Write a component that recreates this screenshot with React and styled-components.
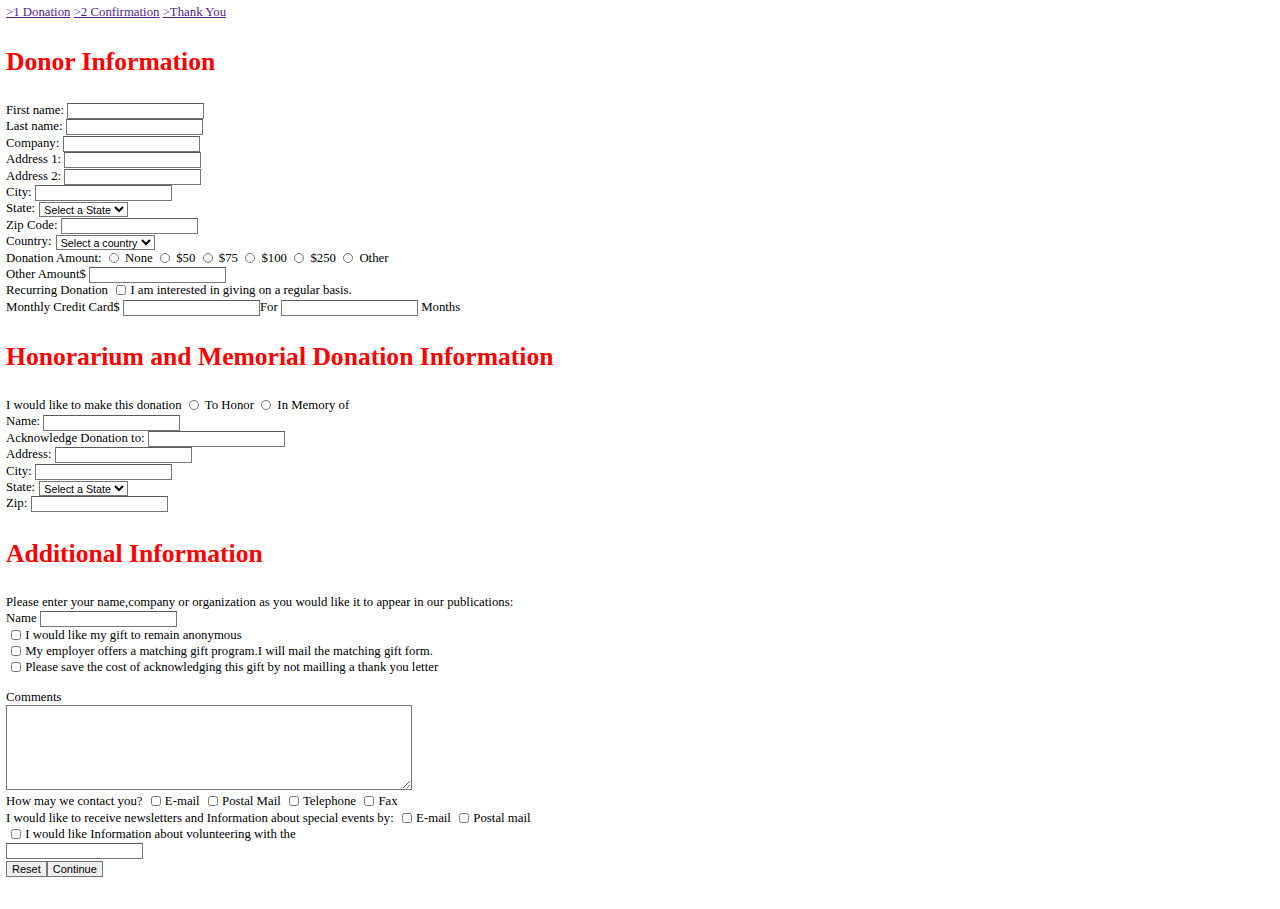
import React from 'react';
import styled, { createGlobalStyle } from 'styled-components';

const GlobalStyle = createGlobalStyle`
  body {
    margin: 0;
    background: #fff;
  }
`;

const states = ['Select a State'];
const countries = ['Select a country'];

const App = () => {
  return (
    <Page>
      <GlobalStyle />
      <Nav>
        <a href="#donation">&gt;1 Donation</a> <a href="#confirm">&gt;2 Confirmation</a>{' '}
        <a href="#thanks">&gt;Thank You</a>
      </Nav>

      <Heading>Donor Information</Heading>
      <Row>First name: <TextInput /></Row>
      <Row>Last name: <TextInput /></Row>
      <Row>Company: <TextInput /></Row>
      <Row>Address 1: <TextInput /></Row>
      <Row>Address 2: <TextInput /></Row>
      <Row>City: <TextInput /></Row>
      <Row>
        State:{' '}
        <Select defaultValue={states[0]}>
          {states.map((s) => (
            <option key={s}>{s}</option>
          ))}
        </Select>
      </Row>
      <Row>Zip Code: <TextInput /></Row>
      <Row>
        Country:{' '}
        <Select defaultValue={countries[0]}>
          {countries.map((c) => (
            <option key={c}>{c}</option>
          ))}
        </Select>
      </Row>
      <Row>
        Donation Amount:
        {['None', '$50', '$75', '$100', '$250', 'Other'].map((v) => (
          <React.Fragment key={v}>
            {' '}
            <Radio name="amount" /> {v}
          </React.Fragment>
        ))}
      </Row>
      <Row>Other Amount$ <TextInput /></Row>
      <Row>
        Recurring Donation <Check /> I am interested in giving on a regular basis.
      </Row>
      <Row>
        Monthly Credit Card$ <TextInput />For <TextInput /> Months
      </Row>

      <Heading>Honorarium and Memorial Donation Information</Heading>
      <Row>
        I would like to make this donation <Radio name="honor" /> To Honor{' '}
        <Radio name="honor" /> In Memory of
      </Row>
      <Row>Name: <TextInput /></Row>
      <Row>Acknowledge Donation to: <TextInput /></Row>
      <Row>Address: <TextInput /></Row>
      <Row>City: <TextInput /></Row>
      <Row>
        State:{' '}
        <Select defaultValue={states[0]}>
          {states.map((s) => (
            <option key={s}>{s}</option>
          ))}
        </Select>
      </Row>
      <Row>Zip: <TextInput /></Row>

      <Heading>Additional Information</Heading>
      <Row>Please enter your name,company or organization as you would like it to appear in our publications:</Row>
      <Row>Name <TextInput /></Row>
      <Row><Check /> I would like my gift to remain anonymous</Row>
      <Row><Check /> My employer offers a matching gift program.I will mail the matching gift form.</Row>
      <Row><Check /> Please save the cost of acknowledging this gift by not mailling a thank you letter</Row>
      <Spacer />
      <Row>Comments</Row>
      <Comments />
      <Row>
        How may we contact you? <Check /> E-mail <Check /> Postal Mail <Check /> Telephone{' '}
        <Check /> Fax
      </Row>
      <Row>
        I would like to receive newsletters and Information about special events by: <Check /> E-mail{' '}
        <Check /> Postal mail
      </Row>
      <Row><Check /> I would like Information about volunteering with the</Row>
      <InputRow>
        <TextInput />
      </InputRow>
      <Buttons>
        <Button type="reset">Reset</Button>
        <Button type="button">Continue</Button>
      </Buttons>
    </Page>
  );
};

const Page = styled.form`
  padding: 4px 6px 20px;
  font-family: 'Liberation Serif', 'Times New Roman', serif;
  font-size: 12.8px;
  color: #000;
`;

const Nav = styled.div`
  height: 16px;
  line-height: 16px;
  a {
    color: #551a8b;
    text-decoration: underline;
  }
`;

const Heading = styled.h2`
  margin: 27px 0 25px;
  font-size: 25.6px;
  line-height: 30px;
  font-weight: bold;
  color: #ff0000;
`;

const Row = styled.div`
  height: 16.4px;
  line-height: 16.4px;
  white-space: nowrap;
`;

const InputRow = styled.div`
  display: flex;
  height: 17px;
  padding-top: 0.8px;
`;

const Spacer = styled.div`
  height: 13px;
`;

const TextInput = styled.input.attrs({ type: 'text' })`
  box-sizing: border-box;
  width: 137px;
  height: 16px;
  margin: 0;
  padding: 1px 2px;
  border: 1px solid #767676;
  border-top-color: #5a5a5a;
  font: 11px 'Liberation Sans', Arial, sans-serif;
  vertical-align: middle;
  background: #fff;
`;

const Select = styled.select`
  box-sizing: border-box;
  height: 15px;
  margin: 0 0 0 1px;
  padding: 0;
  border: 1px solid #767676;
  border-radius: 0;
  font: 10.7px 'Liberation Sans', Arial, sans-serif;
  color: #000;
  background: #fff;
  vertical-align: middle;
`;

const Radio = styled.input.attrs({ type: 'radio' })`
  width: 10px;
  height: 10px;
  margin: 0 3px 0 4px;
  vertical-align: -1px;
`;

const Check = styled.input.attrs({ type: 'checkbox' })`
  width: 10px;
  height: 10px;
  margin: 0 1px 0 5px;
  vertical-align: -1px;
`;

const Comments = styled.textarea`
  display: block;
  box-sizing: border-box;
  width: 406px;
  height: 85px;
  margin: 0 0 3px;
  padding: 2px;
  border: 1px solid #767676;
  font: 13px 'Liberation Mono', monospace;
`;

const Buttons = styled.div`
  display: flex;
  margin-top: 1px;
`;

const Button = styled.button`
  height: 16px;
  margin: 0;
  padding: 0 5px;
  border: 1px solid #767676;
  border-radius: 0;
  background: #efefef;
  font: 11px 'Liberation Sans', Arial, sans-serif;
  color: #000;
  line-height: 14px;
`;

export default App;
